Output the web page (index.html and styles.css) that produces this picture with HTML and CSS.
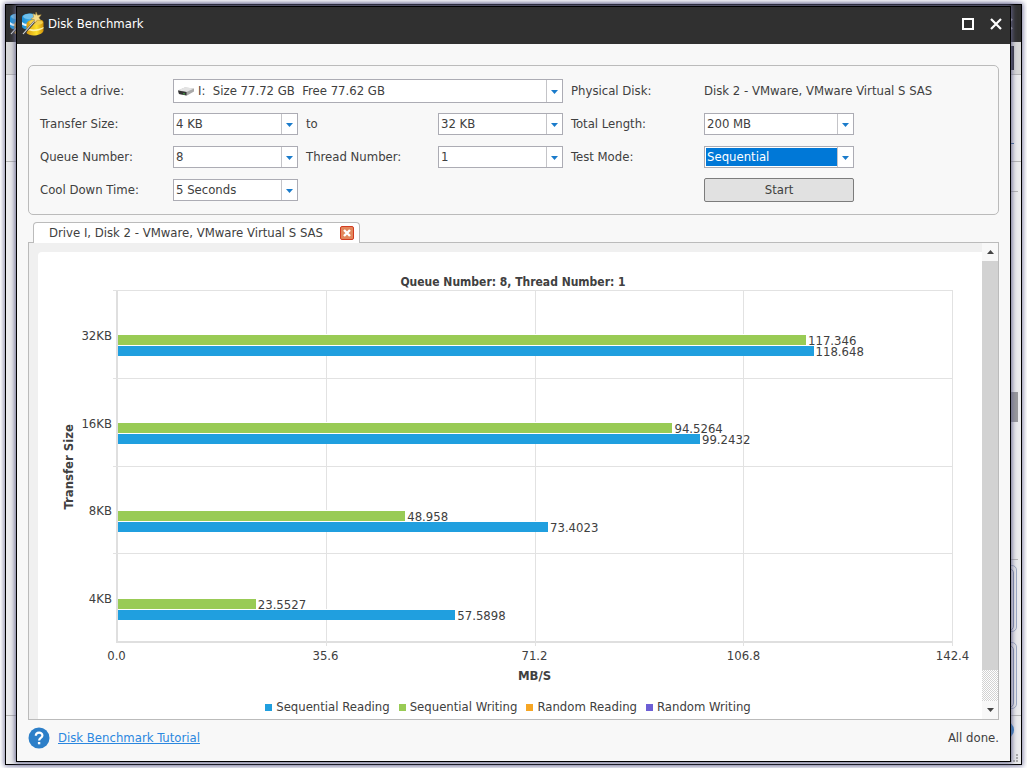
FILE: index.html
```html
<!DOCTYPE html>
<html lang="en">
<head>
<meta charset="utf-8">
<title>Disk Benchmark</title>
<link rel="stylesheet" href="styles.css">
</head>
<body>
<svg class="defs" width="0" height="0" aria-hidden="true">
  <defs>
    <linearGradient id="gold" x1="0" x2="1"><stop offset="0" stop-color="#d99a10"/><stop offset=".6" stop-color="#fce02c"/><stop offset="1" stop-color="#d08f08"/></linearGradient>
    <linearGradient id="sky" x1="0" x2="1"><stop offset="0" stop-color="#1c8fd6"/><stop offset=".5" stop-color="#3aa9e6"/><stop offset="1" stop-color="#0f6cab"/></linearGradient>
    <symbol id="logo" viewBox="0 0 22 24">
      <path d="M0 5C0 1 14 0 15 4v10c-4 4-12 5-15 1z" fill="url(#sky)"/>
      <ellipse cx="8" cy="4.500" rx="7" ry="2.800" fill="#6fc0ec"/>
      <path d="M0 10c2 2 5 2 7 1.500v2C4 14.500 2 14 0 12.500z" fill="#e4f4fc"/>
      <path d="M4.500 12C5 6 21 6 21.500 10v9c-2 5-14 6-17 2z" fill="url(#gold)"/>
      <ellipse cx="14" cy="10.500" rx="6.800" ry="2.600" fill="#f3cf4c"/>
      <path d="M5 16c5 2.500 12 1.500 16.500-1v1.300C17 19.500 9 20 5 18z" fill="#fff4a8"/>
      <path d="M1 22.500L14 8" stroke="#3c3c3c" stroke-width="2.200"/>
      <path d="M1 22L13.500 8" stroke="#d9dde0" stroke-width="1.100"/>
      <path d="M14 0l1.500 3.200 3.700-.4-2.200 2.900 2 3-3.600-.6L13 11l-.7-3.400L8.800 7l2.900-1.900L11 1.800l2.600 1.300z" fill="#f4dc8c" stroke="#b08a30" stroke-width=".5"/>
    </symbol>
  </defs>
</svg>
<div class="desktop">
  <div class="main-window" aria-hidden="true">
    <div class="main-title"><svg class="logo"><use href="#logo"/></svg><svg class="main-close" viewBox="0 0 12 12"><path d="M1 1l10 10M11 1L1 11" stroke="#aaa" stroke-width="2"/></svg></div>
    <div class="main-toolbar"><span class="main-tool"></span></div>
    <div class="main-tabs"><span class="main-tab-label"></span></div>
    <div class="main-row"></div>
    <div class="main-list"><span class="main-thumb"></span></div>
    <div class="main-cards"><span class="main-card"></span><span class="main-card"></span></div>
    <div class="main-footer"><span class="main-help"></span><span class="main-grip"></span></div>
  </div>

  <section class="dialog" role="dialog" aria-labelledby="dialog-title">
    <header class="titlebar">
      <svg class="logo" aria-hidden="true"><use href="#logo"/></svg>
      <h1 id="dialog-title">Disk Benchmark</h1>
      <button class="caption" type="button" aria-label="Maximize"><svg width="12" height="12"><path d="M1 1h10v10H1z" fill="none" stroke="#fff" stroke-width="2"/></svg></button>
      <button class="caption" type="button" aria-label="Close"><svg width="12" height="12"><path d="M1 1l10 10M11 1L1 11" stroke="#fff" stroke-width="2.200"/></svg></button>
    </header>

    <form class="settings">
      <label for="drive">Select a drive:</label>
      <span class="combo combo-drive">
        <svg class="drive-icon" viewBox="0 0 16 9" aria-hidden="true"><path d="M0 3.500L7 .5l9 1v3L9 8.500 1 7z" fill="#a9a9a9"/><path d="M0 3.300L7 .3l9 1.200L8.500 5z" fill="#e3e3e3"/><path d="M0 3.500L8.500 5v3.500L1 7z" fill="#343434"/><path d="M5 6.200l2 .3v1l-2-.3z" fill="#49b749"/></svg>
        <select id="drive"><option>I:&nbsp; Size 77.72 GB&nbsp; Free 77.62 GB</option></select>
      </span>
      <span>Physical Disk:</span>
      <output>Disk 2 - VMware, VMware Virtual S SAS</output>

      <label for="from">Transfer Size:</label>
      <span class="combo"><select id="from"><option>4 KB</option></select></span>
      <label for="to">to</label>
      <span class="combo"><select id="to"><option>32 KB</option></select></span>
      <label for="length">Total Length:</label>
      <span class="combo combo-wide"><select id="length"><option>200 MB</option></select></span>

      <label for="queue">Queue Number:</label>
      <span class="combo"><select id="queue"><option>8</option></select></span>
      <label for="thread">Thread Number:</label>
      <span class="combo"><select id="thread"><option>1</option></select></span>
      <label for="mode">Test Mode:</label>
      <span class="combo combo-wide"><select id="mode" class="selected"><option>Sequential</option></select></span>

      <label for="cool">Cool Down Time:</label>
      <span class="combo"><select id="cool"><option>5 Seconds</option></select></span>
      <button class="start" type="button">Start</button>
    </form>

    <div class="results">
      <div class="tab">
        <span>Drive I, Disk 2 - VMware, VMware Virtual S SAS</span>
        <button class="tab-close" type="button" aria-label="Close tab"><svg width="8" height="8"><path d="M1 1l6 6M7 1L1 7" stroke="#fff" stroke-width="2.400"/></svg></button>
      </div>
      <div class="panel">
        <div class="chart">
          <h2 class="chart-title">Queue Number: 8, Thread Number: 1</h2>
          <div class="axis-title-y"><span>Transfer Size</span></div>
          <div class="categories"><span>32KB</span><span>16KB</span><span>8KB</span><span>4KB</span></div>
          <div class="plot">
            <div class="columns"><i></i><i></i><i></i><i></i></div>
            <div class="bands">
              <div class="band">
                <div class="slot"></div><div class="slot"></div>
                <div class="slot"><div class="bar write" style="width:82.4%"></div><span>117.346</span></div>
                <div class="slot"><div class="bar read" style="width:83.3%"></div><span>118.648</span></div>
              </div>
              <div class="band">
                <div class="slot"></div><div class="slot"></div>
                <div class="slot"><div class="bar write" style="width:66.4%"></div><span>94.5264</span></div>
                <div class="slot"><div class="bar read" style="width:69.7%"></div><span>99.2432</span></div>
              </div>
              <div class="band">
                <div class="slot"></div><div class="slot"></div>
                <div class="slot"><div class="bar write" style="width:34.4%"></div><span>48.958</span></div>
                <div class="slot"><div class="bar read" style="width:51.5%"></div><span>73.4023</span></div>
              </div>
              <div class="band">
                <div class="slot"></div><div class="slot"></div>
                <div class="slot"><div class="bar write" style="width:16.5%"></div><span>23.5527</span></div>
                <div class="slot"><div class="bar read" style="width:40.4%"></div><span>57.5898</span></div>
              </div>
            </div>
          </div>
          <div class="ticks"><span>0.0</span><span>35.6</span><span>71.2</span><span>106.8</span><span>142.4</span></div>
          <div class="axis-title-x">MB/S</div>
          <ul class="legend">
            <li class="key-read">Sequential Reading</li>
            <li class="key-write">Sequential Writing</li>
            <li class="key-random-read">Random Reading</li>
            <li class="key-random-write">Random Writing</li>
          </ul>
        </div>
        <div class="scrollbar">
          <button type="button" aria-label="Scroll up"><svg width="7" height="4"><path d="M0 4L3.500 0 7 4z" fill="#444"/></svg></button>
          <div class="scroll-track"><div class="scroll-thumb"></div></div>
          <button type="button" aria-label="Scroll down"><svg width="7" height="4"><path d="M0 0h7L3.500 4z" fill="#444"/></svg></button>
        </div>
      </div>
    </div>

    <footer class="status">
      <svg class="help" viewBox="0 0 22 22" aria-hidden="true"><circle cx="11" cy="11" r="10.500" fill="#2d7fc8"/><path d="M7.800 8.800c0-4.300 6.600-4.200 6.600-.4 0 2.400-3.300 2.500-3.300 5" fill="none" stroke="#fff" stroke-width="2.200"/><path d="M9.900 15h2.400v2.300H9.900z" fill="#fff"/></svg>
      <a href="#tutorial">Disk Benchmark Tutorial</a>
      <span class="message">All done.</span>
    </footer>
  </section>
</div>
</body>
</html>
```
FILE: styles.css
```css
* { box-sizing: border-box; }
body {
  margin: 0;
  background: #fff;
  color: #404040;
  font: 13px/16px "DejaVu Sans Condensed", "DejaVu Sans", sans-serif;
}
.defs { position: absolute; }
button, select { font: inherit; color: inherit; }
h1, h2 { margin: 0; font-size: inherit; }

.desktop {
  display: grid;
  min-height: 100vh;
  padding: 4px 5px 3px;
}
.main-window, .dialog { grid-area: 1 / 1; border: 1px solid #000; }

/* Window behind the dialog */
.main-window {
  display: flex;
  flex-direction: column;
  align-items: flex-end;
  background: #ebebed;
  box-shadow: 0 0 5px 1px #7c7ca0;
}
.main-title {
  display: flex;
  align-items: center;
  justify-content: space-between;
  align-self: stretch;
  height: 37px;
  padding: 0 8px 0 4px;
  background: #303030;
}
.main-close { width: 12px; }
.main-toolbar {
  align-self: stretch;
  height: 33px;
  padding: 4px 7px 4px 0;
  background: #d8d8d8;
  border-bottom: 1px solid #b5b5b5;
}
.main-tool { display: block; width: 40px; height: 24px; margin-left: auto; background: #30303a; }
.main-tabs {
  display: flex;
  align-items: flex-end;
  justify-content: flex-end;
  align-self: stretch;
  height: 87px;
  padding: 0 7px 12px;
  border-bottom: 1px solid #b5b5b5;
}
.main-tab-label { width: 3px; height: 6px; border-top: 1px solid #3c6b9b; }
.main-row { width: 40px; height: 30px; margin-right: 3px; border-bottom: 1px solid #b5b5b5; }
.main-list {
  display: flex;
  flex: 1;
  width: 40px;
  margin-right: 3px;
  padding-top: 200px;
  border-bottom: 1px solid #b5b5b5;
}
.main-thumb { width: 40px; height: 30px; background: #98989c; }
.main-cards {
  display: flex;
  flex-direction: column;
  align-items: flex-end;
  gap: 10px;
  align-self: stretch;
  height: 156px;
  padding: 5px 4px;
  border-bottom: 1px solid #b5b5b5;
}
.main-card { width: 60px; height: 67px; border: 1px solid #9da9c2; border-radius: 5px; padding: 2px; }
.main-card::before { content: ""; display: block; height: 100%; border: 1px solid #8390ae; border-radius: 5px; }
.main-footer {
  display: flex;
  flex-direction: column;
  align-items: flex-end;
  justify-content: space-between;
  height: 48px;
  padding: 5px 3px 2px;
}
.main-help { width: 18px; height: 18px; margin-right: 4px; border-radius: 50%; background: #2d7fc8; }
.main-grip { width: 8px; height: 8px; border: 2px dotted #aaa; border-width: 0 2px 2px 0; }

/* Dialog */
.dialog {
  display: flex;
  flex-direction: column;
  margin: 2px 11px 3px;
  background: #f8f8f8;
  box-shadow: 0 0 5px 1px #66668c;
  z-index: 1;
}
.logo { width: 22px; height: 24px; }
.titlebar {
  display: flex;
  align-items: center;
  height: 37px;
  padding: 0 0 3px 5px;
  background: #303030;
  color: #fff;
}
.titlebar h1 { flex: 1; margin-left: 4px; font-weight: normal; }
.caption {
  display: grid;
  place-items: center;
  width: 28px;
  height: 28px;
  padding: 0;
  border: 0;
  background: none;
}

.settings {
  display: grid;
  grid-template-columns: 133px 133px 132px 133px 133px 1fr;
  grid-auto-rows: 24px;
  row-gap: 9px;
  align-items: center;
  margin: 21px 11px 0;
  padding: 13px 11px 12px;
  border: 1px solid #bbb;
  border-radius: 5px;
}
.combo { position: relative; width: 125px; height: 22px; }
.combo-wide { width: 150px; }
.combo-drive { grid-column: 2 / 5; width: 390px; height: 24px; }
.combo select {
  display: block;
  width: 100%;
  height: 100%;
  padding: 0 18px 0 2px;
  border: 1px solid #acacb4;
  border-radius: 0;
  appearance: none;
  background: linear-gradient(#c4c4c8, #c4c4c8) right 15px top / 1px 100% no-repeat #fff;
}
.combo-drive select { padding-left: 24px; }
.combo::after {
  content: "";
  position: absolute;
  right: 5px;
  top: calc(50% - 1px);
  width: 7px;
  height: 4px;
  background: #1a7bcb;
  clip-path: polygon(0 0, 100% 0, 50% 100%);
  pointer-events: none;
}
.combo .selected {
  color: #fff;
  background:
    linear-gradient(#c4c4c8, #c4c4c8) right 15px top / 1px 100% no-repeat,
    linear-gradient(#0078d7, #0078d7) 1px 1px / calc(100% - 17px) calc(100% - 2px) no-repeat #fff;
}
.drive-icon { position: absolute; left: 5px; top: 8px; width: 16px; height: 9px; }
.start {
  grid-column: 6;
  width: 150px;
  height: 24px;
  padding: 0;
  border: 1px solid #7c7c7c;
  border-radius: 2px;
  background: #e1e1e1;
}

.results { display: flex; flex: 1; flex-direction: column; margin: 7px 11px 0; }
.tab {
  display: flex;
  align-items: center;
  align-self: flex-start;
  gap: 17px;
  z-index: 1;
  height: 21px;
  margin: 0 0 -1px 5px;
  padding: 0 5px 0 15px;
  border: 1px solid #bbb;
  border-bottom: 0;
  border-radius: 4px 4px 0 0;
  background: #fff;
}
.tab-close {
  display: grid;
  place-items: center;
  width: 14px;
  height: 14px;
  padding: 0;
  border: 1px solid #d23c22;
  border-radius: 2px;
  background: #e2875c;
}
.panel {
  display: flex;
  flex: 1;
  border: 1px solid #bbb;
  background: #f0f0f0;
}
.chart {
  display: grid;
  flex: 1;
  grid-template-columns: 22px 41px 1fr;
  grid-template-rows: auto 1fr auto auto auto;
  margin: 9px 0 0 9px;
  padding: 22px 29px 4px 15px;
  border-radius: 4px 0 0 0;
  background: #fff;
}
.chart-title { grid-column: 1 / 4; margin-left: 20px; font-size: 12px; text-align: center; }
.axis-title-y { display: grid; place-items: center; width: 32px; font-weight: bold; }
.axis-title-y span { writing-mode: vertical-rl; transform: rotate(180deg); }
.categories { display: grid; grid-auto-rows: 1fr; align-items: center; padding: 2px 4px 0 0; text-align: right; }
.plot { display: grid; border-left: 2px solid #dfdfdf; border-bottom: 2px solid #dfdfdf; }
.columns, .bands { grid-area: 1 / 1; display: grid; }
.columns { grid-template-columns: repeat(4, 1fr); margin-bottom: -5px; }
.columns i { border-right: 1px solid #e2e2e2; }
.bands { grid-auto-rows: 1fr; margin-left: -5px; }
.band {
  display: flex;
  flex-direction: column;
  justify-content: center;
  padding-left: 5px;
  border-top: 1px solid #e2e2e2;
}
.slot { display: flex; align-items: center; height: 11px; }
.slot span { margin-left: 2px; padding-top: 2px; line-height: 11px; }
.bar { height: 11px; border-top: 1px solid #fff; background-clip: padding-box; }
.write { background-color: #99cb55; }
.read { background-color: #209fdf; }
.ticks {
  display: grid;
  grid-column: 3;
  grid-template-columns: repeat(5, 1fr);
  margin: 5px -104px 0;
  text-align: center;
}
.axis-title-x { grid-column: 3; margin-top: 4px; font-weight: bold; text-align: center; }
.legend {
  display: flex;
  grid-column: 1 / 4;
  justify-content: center;
  gap: 9px;
  margin: 15px 0 0 10px;
  padding: 0;
  list-style: none;
}
.legend li { display: flex; align-items: center; gap: 4px; }
.legend li::before { content: ""; width: 7px; height: 7px; }
.key-read::before { background: #209fdf; }
.key-write::before { background: #99cb55; }
.key-random-read::before { background: #f6a625; }
.key-random-write::before { background: #6d5fd5; }

.scrollbar { display: flex; flex-direction: column; width: 16px; background: #f8f8f8; }
.scrollbar button { display: grid; place-items: center; height: 18px; padding: 0; border: 0; background: none; }
.scroll-track { flex: 1; background: repeating-conic-gradient(#d2d2d2 0 25%, #fff 0 50%) 0 0 / 2px 2px; }
.scroll-thumb { height: 93%; background: #d2d2d2; }

.status { display: flex; align-items: center; height: 41px; padding: 0 11px 5px; }
.help { width: 22px; height: 22px; margin-right: 8px; }
.status a { color: #2b87df; }
.message { margin-left: auto; }
```
